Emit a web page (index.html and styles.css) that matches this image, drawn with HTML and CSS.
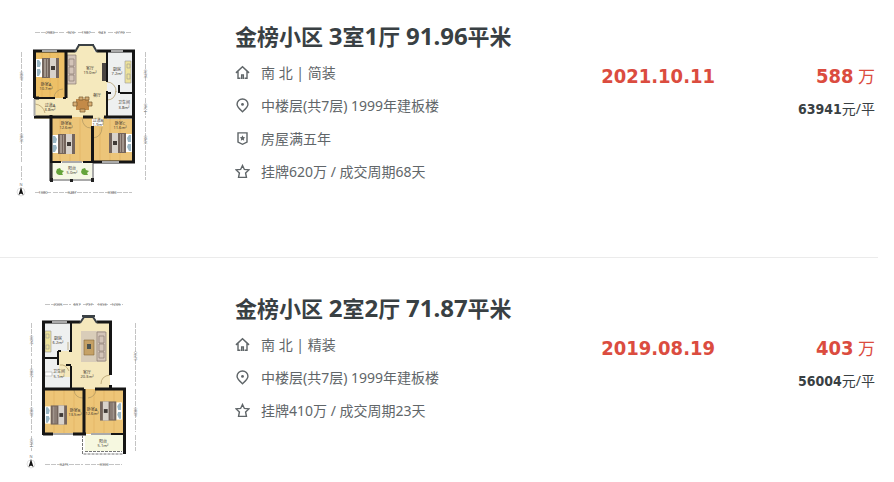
FILE: index.html
```html
<!DOCTYPE html>
<html lang="zh-CN">

<head>
    <meta charset="UTF-8">
    <meta name="viewport" content="width=device-width, initial-scale=1.0">
    <title>金榜小区 成交记录</title>

    <link rel="stylesheet" href="styles.css">
</head>

<body>

    <!-- shared symbols -->
    <svg class="symbols" aria-hidden="true">
        <symbol id="i-house" viewBox="0 0 16 16">
            <path d="M1 8.4 8 1.800l7 6.600M3.200 7v7.200h2.600M12.800 7v7.200h-2.600" />
            <path d="M7.100 14.800v-4.300h1.800v4.300" />
        </symbol>
        <symbol id="i-pin" viewBox="0 0 16 16">
            <path d="M8 14.600C5 11.800 2.200 9.500 2.200 6.600a5.800 5.600 0 0 1 11.600 0C13.800 9.500 11 11.800 8 14.600z" />
            <circle class="fill" cx="8" cy="6.800" r="1.500" />
        </symbol>
        <symbol id="i-badge" viewBox="0 0 16 16">
            <path d="M3.200 2h9.600v9.800L8 14.200l-4.800-2.400z" />
            <path class="fill" d="M8 4.600l.9 1.900 2 .3-1.500 1.400.4 2.100L8 9.300l-1.800 1 .4-2.100-1.500-1.400 2-.3z" />
        </symbol>
        <symbol id="i-star" viewBox="0 0 16 16">
            <path d="M8 1.600l2 4.200 4.800.5-3.500 3.300.9 4.700H3.800l.9-4.700L1.200 6.300 6 5.800z" />
        </symbol>
        <symbol id="bed" viewBox="0 0 23 20">
            <path fill="#fff" d="M0 1h6v18H0z" />
            <path fill="#9ab6c4" d="M1 2h2l2 3-1 4H1zM1 11h3l1 3-2 4H1z" />
            <path fill="#74655d" d="M6 0h17v20H6z" />
            <path fill="#a2968d" d="M8 1h2v18H8zM11 1h1v18h-1z" />
            <path fill="#d8d2cb" d="M14 0h6v20h-6z" />
            <path fill="#3f3936" d="M15 8h4v4h-4z" />
        </symbol>
    </svg>

    <ul class="deals">
        <li class="deal">
            <a class="thumb" href="#" aria-label="3室1厅户型图">
                <svg viewBox="0 26 170 172">
                    <g class="dims">
                        <path d="M35 32.500h29M66 32.500h10M78 32.500h17M98 32.500h8M108 32.500h24" />
                        <path d="M21.500 52v48M21.500 103v60M21.500 166v14M145.500 52v43M145.500 98v20M145.500 121v41M145.500 165v15" />
                        <path d="M35 192.500h16M53 192.500h38M93 192.500h39" />
                    </g>
                    <g class="dim-text">
                        <text x="50" y="34">2980</text>
                        <text x="71" y="34">920</text>
                        <text x="86" y="34">1987</text>
                        <text x="102" y="34">943</text>
                        <text x="120" y="34">2770</text>
                        <text x="43" y="194">1080</text>
                        <text x="72" y="194">3487</text>
                        <text x="112" y="194">3380</text>
                        <text transform="translate(23 76) rotate(-90)">4080</text>
                        <text transform="translate(23 138) rotate(-90)">3780</text>
                        <text transform="translate(147 74) rotate(-90)">3470</text>
                        <text transform="translate(147 108) rotate(-90)">1760</text>
                        <text transform="translate(147 140) rotate(-90)">3780</text>
                    </g>
                    <!-- floors -->
                    <path fill="#f5e9bd" d="M78 46h15l2 6h12v67H34V98h31V52h11z" />
                    <path fill="#edc067" d="M35 52h31v46H35z" />
                    <path fill="#ecc579" d="M51 117h41v45H51zM93 126h10v-9h30v45H93z" />
                    <path fill="#eef0f0" d="M107 52h25v67h-25z" />
                    <path fill="#f6f8e5" d="M51 163h41v16H51z" />
                    <path class="grain" d="M42 53v44M50 53v44M58 53v44M60 118v43M70 118v43M80 118v43M100 127v34M110 118v43M120 118v43" />
                    <!-- furniture -->
                    <use href="#bed" x="36" y="58" width="23" height="20" />
                    <use href="#bed" x="52" y="134" width="23" height="20" />
                    <use href="#bed" width="23" height="20" transform="translate(132 133) scale(-1 1)" />
                    <path fill="#d3c4b8" stroke="#8a7b70" stroke-width=".7" d="M67 55h9v29h-9zM69 59h5v7h-5zM69 67h5v7h-5zM69 75h5v6h-5z" />
                    <path fill="#4a4542" d="M102 63h5v18h-5z" />
                    <path fill="#eee39b" stroke="#999" stroke-width=".6" d="M125 61h6v22h-6zM127 64h3v4h-3zM127 74h3v5h-3z" />
                    <path fill="#c38a48" d="M76 99h13v11H76z" />
                    <path fill="#d8ae73" stroke="#74572f" stroke-width=".7" d="M79 97h4v3h-4zM85 97h4v3h-4zM73 102h4v4h-4zM88 102h4v4h-4zM80 109h5v3h-5z" />
                    <path class="doors" d="M54 98a9 9 0 0 1 9-9M107 82a9 9 0 0 1 9 10M107 100q8 0 9-9M82 118q1 10 9 10M93 138q9-1 9-11M35 104q8 1 10 9" />
                    <!-- walls -->
                    <path class="wall" d="M34.500 98V51H75M97 51h36.500v111H93M66 52v46M51 115v66M34 117h18M34 98h5M51 117h21M83 117h10M92.500 126v37M104 117h29" />
                    <path class="wall thin" d="M107 52v30M107 91v26M107 93h4M120 93h13M119 85v8M35 98h20M63 98h3M51 162h10M83 162h10" />
                    <path class="bay" d="M75 52l4-7h14l4 7M78 45h16" />
                    <path fill="none" stroke="#aaa" stroke-width="2" d="M42 51h15M111 51h12M62 162h20M102 162h17M34.500 99v17" />
                    <path class="rail" d="M51 163v17h42v-17" />
                    <path fill="#222" d="M50 178h3v4h-3zM91 178h3v4h-3zM70 179h3v3h-3z" />
                    <path fill="#65a43b" d="M57 169l3-1 1 2 3 1-2 2 1 2-4 0-2-1-1-2zM82 169l3-1 1 2 3 1-2 2 1 2-4 0-2-1-1-2z" />
                    <g class="room">
                        <text x="46" y="86">卧室A</text>
                        <text x="46" y="90">10.7m²</text>
                        <text x="90" y="70">客厅</text>
                        <text x="90" y="74">19.0m²</text>
                        <text x="117" y="71">厨房</text>
                        <text x="117" y="75">7.2m²</text>
                        <text x="97" y="97">餐厅</text>
                        <text x="50" y="107">过道A</text>
                        <text x="50" y="111">3.8m²</text>
                        <text x="124" y="104">卫生间</text>
                        <text x="124" y="109">3.8m²</text>
                        <text x="66" y="125">卧室B</text>
                        <text x="66" y="129">12.6m²</text>
                        <text x="98" y="122">过道B</text>
                        <text x="98" y="126">1.9m²</text>
                        <text x="120" y="125">卧室C</text>
                        <text x="120" y="129">11.6m²</text>
                        <text x="72" y="170">阳台</text>
                        <text x="72" y="174">5.0m²</text>
                    </g>
                    <circle cx="21" cy="192" r="4" fill="none" stroke="#ccc" stroke-width=".6" />
                    <path fill="#111" d="M21 187l2.500 8-2.500-1.500-2.500 1.500z" />
                    <text class="dim-text" x="21" y="186">N</text>
                </svg>
            </a>
            <div class="info">
                <h2 class="title"><a href="#">金榜小区 <span>3</span>室<span>1</span>厅 <span>91.96</span>平米</a></h2>
                <div class="cols">
                    <ul class="facts">
                        <li><svg class="icon"><use href="#i-house" /></svg>南 北 | 简装</li>
                        <li><svg class="icon"><use href="#i-pin" /></svg>中楼层(共7层) 1999年建板楼</li>
                        <li><svg class="icon"><use href="#i-badge" /></svg>房屋满五年</li>
                        <li><svg class="icon"><use href="#i-star" /></svg>挂牌620万 / 成交周期68天</li>
                    </ul>
                    <div class="date">2021.10.11</div>
                    <div class="price">
                        <div class="total"><b>588</b> 万</div>
                        <div class="unit"><b>63941</b>元/平</div>
                    </div>
                </div>
            </div>
        </li>

        <li class="deal">
            <a class="thumb" href="#" aria-label="2室2厅户型图">
                <svg viewBox="0 298 170 172">
                    <g class="dims">
                        <path d="M45 304.500h26M73 304.500h8M83 304.500h12M97 304.500h11M110 304.500h13" />
                        <path d="M31.500 323v33M31.500 359v27M31.500 389v44M31.500 436v15M135.500 323v63M135.500 389v43M135.500 435v16" />
                        <path d="M45 464.500h38M85 464.500h37" />
                    </g>
                    <g class="dim-text">
                        <text x="58" y="306">2005</text>
                        <text x="77" y="306">697</text>
                        <text x="89" y="306">797</text>
                        <text x="102" y="306">1353</text>
                        <text x="116" y="306">1205</text>
                        <text x="64" y="466">3475</text>
                        <text x="104" y="466">3300</text>
                        <text transform="translate(33 340) rotate(-90)">2400</text>
                        <text transform="translate(33 373) rotate(-90)">2080</text>
                        <text transform="translate(33 412) rotate(-90)">4080</text>
                        <text transform="translate(33 443) rotate(-90)">1500</text>
                        <text transform="translate(137 356) rotate(-90)">6770</text>
                        <text transform="translate(137 412) rotate(-90)">4080</text>
                    </g>
                    <!-- floors -->
                    <path fill="#f5e8bd" d="M72 323h9l3-6h9l4 6h13v66H72v-12H58v-26h14z" />
                    <path fill="#eef0f0" d="M44 323h28v28H58v7h-14zM44 359h15v18h12v12H44z" />
                    <path fill="#edc577" d="M44 389h40v45H44zM85 389h38v45H85z" />
                    <path fill="#f6f8e0" d="M85 435h38v16H85z" />
                    <path class="grain" d="M54 390v43M64 390v43M74 390v43M94 390v43M104 390v43M114 390v43" />
                    <!-- furniture -->
                    <path fill="#d9cdb9" d="M81 331h24v31H81z" />
                    <path fill="#c5a166" stroke="#866a3a" stroke-width=".6" d="M84 340h10v15H84z" />
                    <path fill="#4b5350" d="M87 344h4v5h-4z" />
                    <path fill="#d3c4b8" stroke="#8a7b70" stroke-width=".7" d="M97 332h9v29h-9zM99 336h5v7h-5zM99 344h5v7h-5zM99 352h5v6h-5z" />
                    <path fill="#eee39b" stroke="#999" stroke-width=".6" d="M45 331h6v21h-6zM46 334h3v4h-3zM46 345h3v4h-3z" />
                    <path fill="#fff" stroke="#aaa" stroke-width=".6" d="M45 372h7v4h-7z" />
                    <use href="#bed" x="45" y="405" width="22" height="20" />
                    <use href="#bed" width="22" height="20" transform="translate(122 401) scale(-1 1)" />
                    <path class="doors" d="M68 350v-8M60 365q6-1 9 6M74 390q1 8 9 8M88 398q7-1 8-8M101 384q0-8 9-9" />
                    <!-- walls -->
                    <path class="wall" d="M43.500 435V322H80M97 322h13.500v53M110.500 385v5M43 389h41M95 389h29.500v65M43 434h10M73 434h13M84 389v45" />
                    <path class="wall thin" d="M71 322v28M43 358h15M58 351v14M58 351h3M69 351h3M71 366v23M66 365h5M111 434h13" />
                    <path class="bay" d="M80 323l4-6h9l4 6M82 316h13" />
                    <path fill="none" stroke="#aaa" stroke-width="2" d="M52 322h15M53 434h20M91 434h20" />
                    <path fill="none" stroke="#777" stroke-dasharray="3 1" d="M82.500 435v19h40M85 451.500h37" />
                    <g class="room">
                        <text x="58" y="340">厨房</text>
                        <text x="58" y="344">6.2m²</text>
                        <text x="59" y="373">卫生间</text>
                        <text x="59" y="378">5.1m²</text>
                        <text x="87" y="374">客厅</text>
                        <text x="87" y="378">20.3m²</text>
                        <text x="75" y="412">卧室B</text>
                        <text x="75" y="416">13.5m²</text>
                        <text x="92" y="411">卧室A</text>
                        <text x="92" y="415">12.6m²</text>
                        <text x="103" y="443">阳台</text>
                        <text x="103" y="447">5.1m²</text>
                    </g>
                    <circle cx="31" cy="464" r="4" fill="none" stroke="#ccc" stroke-width=".6" />
                    <path fill="#111" d="M31 459l2.500 8-2.500-1.500-2.500 1.500z" />
                    <text class="dim-text" x="31" y="458">N</text>
                </svg>
            </a>
            <div class="info">
                <h2 class="title"><a href="#">金榜小区 <span>2</span>室<span>2</span>厅 <span>71.87</span>平米</a></h2>
                <div class="cols">
                    <ul class="facts">
                        <li><svg class="icon"><use href="#i-house" /></svg>南 北 | 精装</li>
                        <li><svg class="icon"><use href="#i-pin" /></svg>中楼层(共7层) 1999年建板楼</li>
                        <li><svg class="icon"><use href="#i-star" /></svg>挂牌410万 / 成交周期23天</li>
                    </ul>
                    <div class="date">2019.08.19</div>
                    <div class="price">
                        <div class="total"><b>403</b> 万</div>
                        <div class="unit"><b>56004</b>元/平</div>
                    </div>
                </div>
            </div>
        </li>
    </ul>

</body>

</html>
```
FILE: styles.css
```css
body {
    margin: 0;
    background-color: #fff;
    color: #394043;
    font-family: "Noto Sans", "Noto Sans CJK SC", sans-serif;
    font-size: 14px;
}

ul {
    margin: 0;
    padding: 0;
    list-style: none;
}

a {
    color: inherit;
    text-decoration: none;
}

.symbols {
    position: absolute;
    width: 0;
    height: 0;
}

.deals {
    margin-right: 16px;
}

.deal {
    display: flex;
    padding: 33px 0 59px;
    border-bottom: 1px solid #ebebeb;
}

.deal:first-child {
    padding-top: 19px;
}

.deal:last-child {
    padding-bottom: 0;
    border-bottom: none;
}

.thumb {
    flex: none;
    width: 170px;
    margin: 7px 65px 0 0;
}

.thumb svg {
    display: block;
    width: 100%;
}

.info {
    flex: 1;
}

.title {
    margin: 0 0 3px;
    font-size: 22px;
    line-height: 34px;
}

.title span {
    font-size: 24px;
}

.cols {
    display: flex;
}

.facts {
    flex: 1;
    color: #616669;
}

.facts li {
    display: flex;
    align-items: center;
    gap: 11px;
    line-height: 33px;
}

.icon {
    width: 15px;
    height: 15px;
    fill: none;
    stroke: #5f6568;
    stroke-width: 1.5;
}

.fill {
    fill: #5f6568;
    stroke: none;
}

.date,
.total {
    color: #db4c3f;
    font-size: 20px;
    line-height: 40px;
}

.date,
.price b {
    font-family: "DejaVu Sans Condensed", "DejaVu Sans", sans-serif;
    font-weight: bold;
}

.price {
    width: 160px;
    padding-right: 3px;
    text-align: right;
}

.total {
    font-size: 17px;
}

.total b {
    font-size: 20px;
}

.unit {
    line-height: 24px;
}

/* floor plans */
.dims {
    fill: none;
    stroke: #c4c4c4;
    stroke-width: 1;
    stroke-dasharray: 5 1;
}

.dim-text {
    fill: #777;
    font-size: 4px;
    text-anchor: middle;
}

.room {
    fill: #3c3830;
    font-size: 4px;
    text-anchor: middle;
}

.wall {
    fill: none;
    stroke: #151515;
    stroke-width: 3;
}

.thin {
    stroke-width: 2;
}

.bay {
    fill: none;
    stroke: #3b4145;
    stroke-width: 2;
}

.rail {
    fill: none;
    stroke: #555;
}

.grain {
    fill: none;
    stroke: #dca850;
    stroke-opacity: .4;
}

.doors {
    fill: none;
    stroke: #aa9360;
    stroke-width: .7;
}
```
